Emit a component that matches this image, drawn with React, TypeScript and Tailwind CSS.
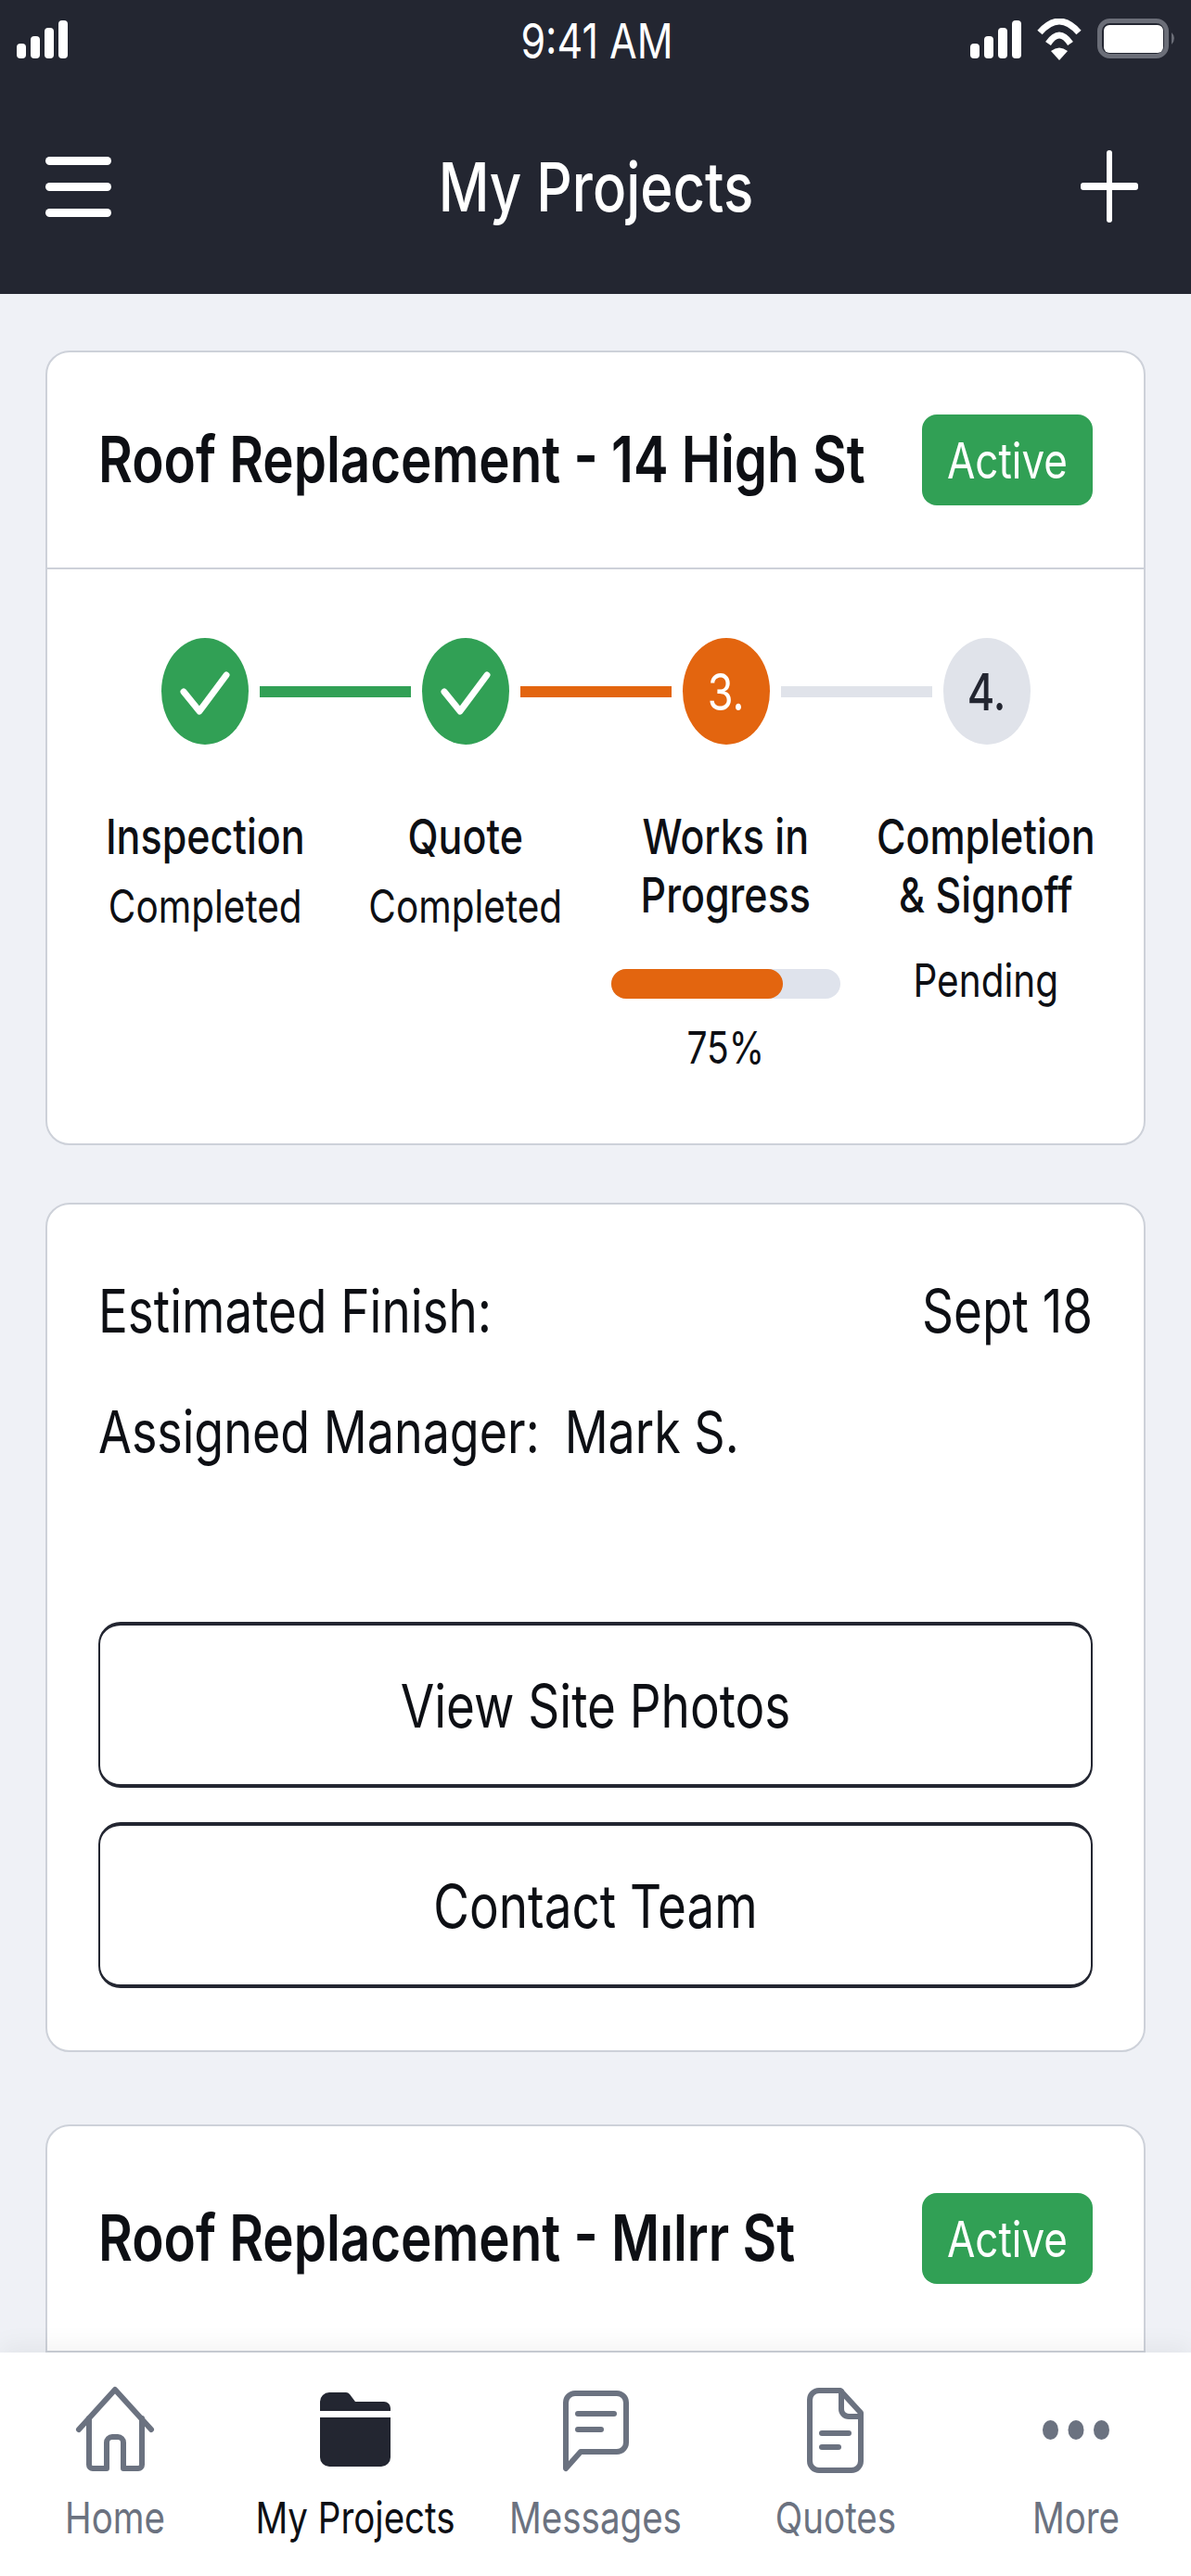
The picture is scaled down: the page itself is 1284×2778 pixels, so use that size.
import { Fragment } from "react";

const tall = "inline-block scale-y-[1.22]";

function SignalBars() {
  return (
    <svg width="55" height="45" viewBox="0 0 55 45" fill="#fff">
      <rect x="0" y="27" width="10" height="16" rx="4" />
      <rect x="15" y="19" width="10" height="24" rx="4" />
      <rect x="30" y="10" width="10" height="33" rx="4" />
      <rect x="45" y="2" width="10" height="41" rx="4" />
    </svg>
  );
}

function StatusBar() {
  return (
    <div className="grid grid-cols-3 pt-[20px] pl-[18px] pr-[15px] h-[65px]">
      <SignalBars />
      <div className="text-center text-[43px] leading-[49px] h-[45px] text-white">
        <span className={tall}>9:41 AM</span>
      </div>
      <div className="flex justify-end gap-[17px]">
        <SignalBars />
        <svg width="48" height="45" viewBox="0 0 48 45" fill="none" stroke="#fff" strokeWidth="7">
          <path d="M3 15 Q24 -9 45 15" />
          <path d="M12 27 Q24 9 36 27" />
          <path d="M24 45 L15 35 Q24 28 33 35 Z" fill="#fff" stroke="none" />
        </svg>
        <svg width="86" height="45" viewBox="0 0 86 45" fill="none">
          <rect x="2.5" y="2.5" width="72" height="38" rx="11" stroke="#6b6e78" strokeWidth="5" />
          <rect x="7" y="7" width="64" height="30" rx="6" fill="#fff" />
          <path d="M80 15 Q86 21 80 28 Z" fill="#6b6e78" />
        </svg>
      </div>
    </div>
  );
}

function NavBar() {
  return (
    <div className="flex items-center justify-between h-[100px] mt-[86px] pl-[49px] pr-[57px]">
      <div className="flex flex-col gap-[19px] w-[71px]">
        <div className="h-[9px] rounded-full bg-white"></div>
        <div className="h-[9px] rounded-full bg-white"></div>
        <div className="h-[9px] rounded-full bg-white"></div>
      </div>
      <h1 className="text-[60px] leading-[70px] font-medium text-white">
        <span className={tall}>My Projects</span>
      </h1>
      <svg width="62" height="78" viewBox="0 0 62 78" fill="#fff">
        <rect x="0" y="35" width="62" height="8" rx="3" />
        <rect x="28" y="0" width="6" height="78" rx="3" />
      </svg>
    </div>
  );
}

function ActiveBadge() {
  return (
    <div className="flex items-center justify-center w-[184px] h-[98px] rounded-[16px] bg-[#31a055] text-white text-[44px]">
      <span className={tall}>Active</span>
    </div>
  );
}

function CheckMark() {
  return (
    <svg width="94" height="115" viewBox="0 0 94 115" fill="none" stroke="#fff" strokeWidth="7" strokeLinecap="round" strokeLinejoin="round">
      <path d="M24 58 L41 79 L70 40" />
    </svg>
  );
}

function Stepper() {
  return (
    <div className="flex items-center justify-center pt-[74px]">
      <div className="flex items-center justify-center w-[94px] h-[115px] rounded-[50%] bg-[#31a055]">
        <CheckMark />
      </div>
      <div className="w-[163px] h-[12px] mx-[12px] bg-[#31a055]"></div>
      <div className="flex items-center justify-center w-[94px] h-[115px] rounded-[50%] bg-[#31a055]">
        <CheckMark />
      </div>
      <div className="w-[163px] h-[12px] mx-[12px] bg-[#e3650f]"></div>
      <div className="flex items-center justify-center w-[94px] h-[115px] rounded-[50%] bg-[#e3650f] text-white text-[45px]">
        <span className={tall}>3.</span>
      </div>
      <div className="w-[163px] h-[12px] mx-[12px] bg-[#e0e3ea]"></div>
      <div className="flex items-center justify-center w-[94px] h-[115px] rounded-[50%] bg-[#e0e3ea] text-[#232631] text-[45px] font-medium">
        <span className={tall}>4.</span>
      </div>
    </div>
  );
}

const stepLabels = [
  { lines: ["Inspection"], status: "Completed" },
  { lines: ["Quote"], status: "Completed" },
];

function StepLabels() {
  return (
    <div className="grid grid-cols-4 px-[30px] pt-[68px] pb-[78px] text-center text-[#0d0f14]">
      {stepLabels.map((step) => (
        <div key={step.lines[0]}>
          <div className="text-[43px] leading-[63px] font-medium">
            <span className={tall}>{step.lines[0]}</span>
          </div>
          <div className="mt-[12px] text-[40.5px] leading-[63px]">
            <span className={tall}>{step.status}</span>
          </div>
        </div>
      ))}
      <div>
        <div className="text-[43px] leading-[63px] font-medium">
          <div><span className={tall}>Works in</span></div>
          <div><span className={tall}>Progress</span></div>
        </div>
        <div className="w-[247px] h-[32px] mx-auto mt-[48px] rounded-full bg-[#dfe3ec]">
          <div className="w-3/4 h-full rounded-full bg-[#e3650f]"></div>
        </div>
        <div className="mt-[28px] text-[39px] leading-[50px]">
          <span className={tall}>75%</span>
        </div>
      </div>
      <div>
        <div className="text-[43px] leading-[63px] font-medium">
          <div><span className={tall}>Completion</span></div>
          <div><span className={tall}>&amp; Signoff</span></div>
        </div>
        <div className="mt-[29px] text-[40.5px] leading-[63px]">
          <span className={tall}>Pending</span>
        </div>
      </div>
    </div>
  );
}

function ProgressCard() {
  return (
    <section className="mx-[49px] mt-[61px] rounded-[26px] border-2 border-[#cdd1d9] bg-white">
      <div className="flex items-center justify-between h-[234px] px-[55px] border-b-2 border-[#cdd1d9]">
        <h2 className="text-[56.5px] font-semibold text-[#0d0f14] whitespace-nowrap">
          <span className={tall}>Roof Replacement - 14 High St</span>
        </h2>
        <ActiveBadge />
      </div>
      <Stepper />
      <StepLabels />
    </section>
  );
}

function OutlineButton({ label }: { label: string }) {
  return (
    <button className="flex items-center justify-center w-full h-[179px] pt-[3px] rounded-[24px] border-x-2 border-y-[4px] border-[#232631] bg-white text-[53px] text-[#0d0f14]">
      <span className={tall}>{label}</span>
    </button>
  );
}

function DetailsCard() {
  return (
    <section className="mx-[49px] mt-[62px] h-[916px] rounded-[26px] border-2 border-[#cdd1d9] bg-white px-[55px] pt-[80px] text-[#0d0f14] text-[53px] leading-[70px]">
      <div className="flex justify-between">
        <span className={tall}>Estimated Finish:</span>
        <span className={tall}>Sept 18</span>
      </div>
      <div className="flex gap-[27px] mt-[61px] text-[52px]">
        <span className={tall}>Assigned Manager:</span>
        <span className={tall}>Mark S.</span>
      </div>
      <div className="flex flex-col gap-[37px] mt-[169px]">
        <OutlineButton label="View Site Photos" />
        <OutlineButton label="Contact Team" />
      </div>
    </section>
  );
}

function NextProjectCard() {
  return (
    <section className="flex items-center justify-between mx-[49px] mt-[78px] flex-1 rounded-t-[26px] border-2 border-[#cdd1d9] bg-white px-[55px]">
      <h2 className="text-[56.5px] font-semibold text-[#0d0f14] whitespace-nowrap">
        <span className={tall}>Roof Replacement - Mılrr St</span>
      </h2>
      <ActiveBadge />
    </section>
  );
}

const tabs = [
  {
    label: "Home",
    active: false,
    icon: (
      <Fragment>
        <path d="M11 50 L50 7 L89 50" />
        <path d="M22 38 V88 a4 4 0 0 0 4 4 H41 V64 a6 6 0 0 1 6-6 h6 a6 6 0 0 1 6 6 V92 H75 a4 4 0 0 0 4-4 V38" />
      </Fragment>
    ),
  },
  {
    label: "My Projects",
    active: true,
    icon: (
      <g fill="#232631" stroke="none">
        <path d="M12 30 V20 a10 10 0 0 1 10-10 H40 a5 5 0 0 1 4 2 L50 20 H81 a7 7 0 0 1 7 7 V30 Z" />
        <path d="M12 37 H88 V80 a10 10 0 0 1-10 10 H22 a10 10 0 0 1-10-10 Z" />
      </g>
    ),
  },
  {
    label: "Messages",
    active: false,
    icon: (
      <Fragment>
        <path d="M18 92 V21 a10 10 0 0 1 10-10 H73 a10 10 0 0 1 10 10 V64 a10 10 0 0 1-10 10 H34 Z" />
        <path d="M31 33 H70" />
        <path d="M31 50 H56" />
      </Fragment>
    ),
  },
  {
    label: "Quotes",
    active: false,
    icon: (
      <Fragment>
        <path d="M32 8 H55 L77 32 V84 a10 10 0 0 1-10 10 H32 a10 10 0 0 1-10-10 V18 a10 10 0 0 1 10-10 Z" />
        <path d="M56 9 V28 a8 8 0 0 0 8 8 H77" />
        <path d="M35 54 H64" />
        <path d="M35 69 H53" />
      </Fragment>
    ),
  },
  {
    label: "More",
    active: false,
    icon: (
      <g fill="#6b7280" stroke="none">
        <ellipse cx="22.5" cy="50.5" rx="8.5" ry="10.5" />
        <ellipse cx="50" cy="50.5" rx="8.5" ry="10.5" />
        <ellipse cx="77.5" cy="50.5" rx="8.5" ry="10.5" />
      </g>
    ),
  },
];

function TabBar() {
  return (
    <nav className="relative z-10 flex justify-between h-[241px] pt-[33px] px-[44px] bg-white shadow-[0_-8px_24px_rgba(0,0,0,0.05)]">
      {tabs.map((tab) => (
        <div key={tab.label} className="flex flex-col items-center w-[160px]">
          <svg width="100" height="100" viewBox="0 0 100 100" fill="none" stroke="#6b7280" strokeWidth="6" strokeLinecap="round" strokeLinejoin="round">
            {tab.icon}
          </svg>
          <div className={tab.active ? "mt-[20px] text-[38.5px] leading-[50px] whitespace-nowrap text-[#0d0f14]" : "mt-[20px] text-[38.5px] leading-[50px] whitespace-nowrap text-[#6b7280]"}>
            <span className={tall}>{tab.label}</span>
          </div>
        </div>
      ))}
    </nav>
  );
}

export default function App() {
  return (
    <div className="flex flex-col w-[1284px] h-[2778px] overflow-hidden bg-[#eff1f6] font-[Inter,sans-serif]">
      <header className="h-[317px] shrink-0 bg-[#232631]">
        <StatusBar />
        <NavBar />
      </header>
      <main className="flex flex-col flex-1 min-h-0">
        <ProgressCard />
        <DetailsCard />
        <NextProjectCard />
      </main>
      <TabBar />
    </div>
  );
}
